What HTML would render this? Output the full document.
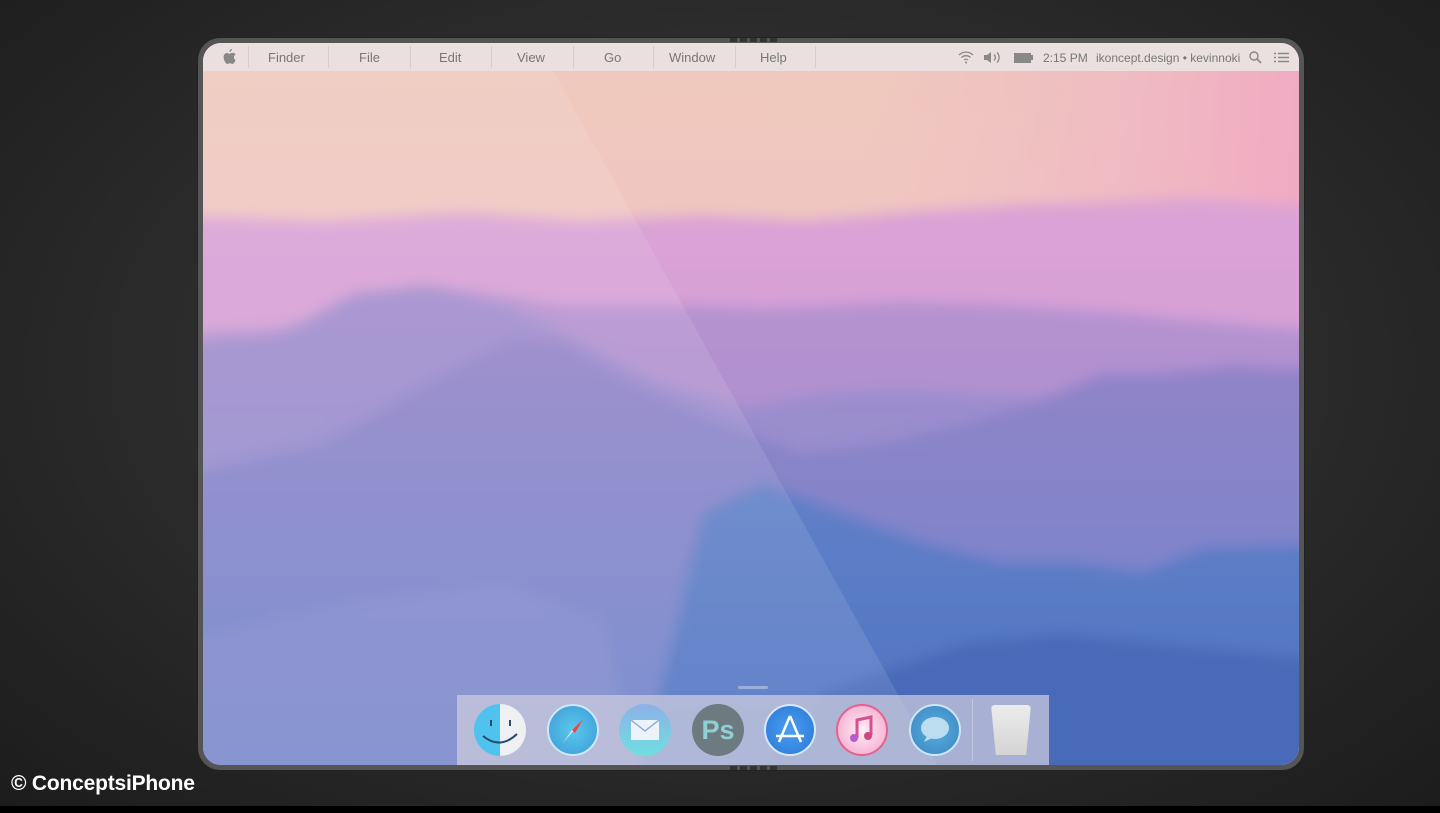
<!DOCTYPE html>
<html><head><meta charset="utf-8"><style>
html,body{margin:0;padding:0;width:1440px;height:813px;overflow:hidden;background:#2a2a2a;font-family:"Liberation Sans",sans-serif}
.bg{position:absolute;inset:0;background:radial-gradient(ellipse at 50% 45%,#3a3a3a 0%,#2b2b2b 55%,#1c1c1c 100%)}
.strip{position:absolute;left:0;top:806px;width:1440px;height:7px;background:#000}
.dev{position:absolute;left:198px;top:38px;width:1106px;height:732px;border-radius:22px;background:#555;box-shadow:0 0 0 1px #222}
.scr{position:absolute;left:203px;top:43px;width:1096px;height:722px;border-radius:18px;overflow:hidden;background:#7f90cc}
.menu{position:absolute;left:0;top:0;width:100%;height:28px;background:#e9e0df;color:#777;font-size:13px}
.menu span{position:absolute;top:7px}
.sep{position:absolute;top:3px;width:1px;height:22px;background:#d6cdcc}
.dock{position:absolute;left:254px;top:652px;width:592px;height:70px;background:rgba(205,205,222,.72)}
.ic{position:absolute;top:9px;width:52px;height:52px;border-radius:50%}
.copy{position:absolute;left:11px;top:772px;color:#fff;font-weight:bold;font-size:21px;letter-spacing:-0.2px}
</style></head><body>
<div class="bg"></div>
<div class="strip"></div>
<div class="dev"></div>
<div class="scr">
<svg width="1096" height="722" style="position:absolute;left:0;top:0">
<defs>
<filter id="b" x="-10%" y="-10%" width="120%" height="120%"><feGaussianBlur stdDeviation="7"/></filter>
<linearGradient id="sky" x1="0" y1="0" x2="0" y2="1"><stop offset="0" stop-color="#efc9bd"/><stop offset="1" stop-color="#f3bfcb"/></linearGradient>
<linearGradient id="skyr" x1="0" y1="0" x2="1" y2="0"><stop offset="0.6" stop-color="#f0b8c8" stop-opacity="0"/><stop offset="1" stop-color="#f09ec4" stop-opacity="0.7"/></linearGradient>
<linearGradient id="m1" x1="0" y1="0" x2="0" y2="1"><stop offset="0" stop-color="#dba2d6"/><stop offset="1" stop-color="#c69ad6"/></linearGradient>
<linearGradient id="m2" x1="0" y1="0" x2="0" y2="1"><stop offset="0" stop-color="#b692d0"/><stop offset="1" stop-color="#9e8cd0"/></linearGradient>
<linearGradient id="m3" x1="0" y1="0" x2="0" y2="1"><stop offset="0" stop-color="#a08ccc"/><stop offset="1" stop-color="#7f90d0"/></linearGradient>
<linearGradient id="m4" x1="0" y1="0" x2="0" y2="1"><stop offset="0" stop-color="#9484c8"/><stop offset="1" stop-color="#6484cc"/></linearGradient>
<linearGradient id="m5" x1="0" y1="0" x2="0" y2="1"><stop offset="0" stop-color="#6080c8"/><stop offset="1" stop-color="#4a6fc0"/></linearGradient>
</defs>
<rect width="1096" height="722" fill="url(#sky)"/>
<rect width="1096" height="300" fill="url(#skyr)"/>
<g filter="url(#b)">
<path d="M-60 172 L120 178 L260 170 L380 178 L500 172 L600 178 L720 168 L820 162 L940 158 L1000 156 L1160 168 L1160 800 L-60 800Z" fill="url(#m1)"/>
<path d="M-60 292 L80 285 L140 262 L180 248 L230 242 L300 252 L360 262 L420 262 L480 262 L560 265 L640 262 L700 258 L800 262 L900 268 L1000 278 L1160 292 L1160 800 L-60 800Z" fill="url(#m2)"/>
<path d="M-60 305 L80 290 L150 250 L220 242 L300 262 L380 300 L460 340 L540 365 L620 350 L700 345 L780 352 L860 355 L940 340 L1020 330 L1160 318 L1160 800 L-60 800Z" fill="url(#m3)" opacity="0.9"/>
<path d="M-60 440 L120 400 L240 330 L310 295 L360 300 L430 340 L520 380 L600 410 L680 400 L760 380 L830 360 L900 330 L960 330 L1030 322 L1160 330 L1160 800 L-60 800Z" fill="url(#m4)"/>
<path d="M420 800 L500 470 L560 440 L640 470 L720 500 L800 520 L880 520 L940 530 L1000 505 L1160 500 L1160 800Z" fill="url(#m5)"/>
<path d="M500 800 L620 650 L760 600 L860 590 L960 600 L1160 620 L1160 800Z" fill="#4a6ab8"/>
<path d="M-60 800 L-60 610 L150 560 L300 540 L400 580 L450 800Z" fill="#8a90cc" opacity="0.5"/>
</g>
<polygon points="0,28 350,28 734,722 0,722" fill="#fff" opacity="0.1"/>
</svg>
<div class="menu">
<svg style="position:absolute;left:20px;top:6px" width="13" height="16" viewBox="0 0 13 16"><path d="M9 0c0 1.5-1.2 2.8-2.6 2.7C6.3 1.3 7.6 0.1 9 0zM12.3 11.5c-.5 1.2-1.5 3.4-2.7 3.4-1.1 0-1.4-.7-2.7-.7s-1.7.7-2.7.7C2.9 14.9.6 11 .6 8c0-2.6 1.7-4 3.3-4 1.1 0 1.9.7 2.7.7.8 0 1.8-.8 3-.8.7 0 2.2.2 3 1.6-2.5 1.5-2 4.8.3 5.7z" fill="#888"/></svg>
<div class="sep" style="left:45px"></div>
<span style="left:65px">Finder</span><div class="sep" style="left:125px"></div>
<span style="left:156px">File</span><div class="sep" style="left:207px"></div>
<span style="left:236px">Edit</span><div class="sep" style="left:288px"></div>
<span style="left:314px">View</span><div class="sep" style="left:370px"></div>
<span style="left:401px">Go</span><div class="sep" style="left:450px"></div>
<span style="left:466px">Window</span><div class="sep" style="left:532px"></div>
<span style="left:557px">Help</span><div class="sep" style="left:612px"></div>
<svg style="position:absolute;left:755px;top:8px" width="16" height="13" viewBox="0 0 16 13"><path d="M1 4a10 10 0 0 1 14 0M3.5 6.5a6.5 6.5 0 0 1 9 0M6 9a3 3 0 0 1 4 0" stroke="#888" fill="none" stroke-width="1.3"/><circle cx="8" cy="11.5" r="1" fill="#888"/></svg>
<svg style="position:absolute;left:780px;top:8px" width="20" height="13" viewBox="0 0 20 13"><path d="M1 4h3l4-3v11l-4-3H1z" fill="#888"/><path d="M11 3.5a4 4 0 0 1 0 6M14 1.5a7 7 0 0 1 0 10" stroke="#888" fill="none" stroke-width="1.3"/></svg>
<div style="position:absolute;left:811px;top:10px;width:15px;height:8px;background:#888;border:1px solid #888"></div><div style="position:absolute;left:828px;top:12px;width:2px;height:5px;background:#888"></div>
<span style="left:840px;font-size:12px;top:8px">2:15 PM</span>
<span style="left:893px;font-size:12px;top:8px">ikoncept.design • kevinnoki</span>
<svg style="position:absolute;left:1046px;top:8px" width="13" height="13" viewBox="0 0 13 13"><circle cx="5" cy="5" r="4" stroke="#888" fill="none" stroke-width="1.4"/><path d="M8 8l4 4" stroke="#888" stroke-width="1.6"/></svg>
<svg style="position:absolute;left:1071px;top:9px" width="15" height="11" viewBox="0 0 15 11"><path d="M0 1.5h2M4 1.5h11M0 5.5h2M4 5.5h11M0 9.5h2M4 9.5h11" stroke="#888" stroke-width="1.5"/></svg>
</div>
<div style="position:absolute;left:535px;top:643px;width:30px;height:3px;border-radius:2px;background:rgba(255,255,255,.35)"></div>
<div class="dock">
<div class="ic" style="left:17px;background:linear-gradient(90deg,#4fc3ee 50%,#eef0f2 50%)"><svg width="52" height="52"><path d="M9 32q17 14 34 -2" stroke="#2a4b6b" stroke-width="2" fill="none"/><path d="M17 16v6M36 16v6" stroke="#2a4b6b" stroke-width="2"/></svg></div>
<div class="ic" style="left:90px;background:radial-gradient(#5cc9ea,#3a9ad8);border:2px solid #cfe8f5;width:48px;height:48px"><svg width="48" height="48"><path d="M34 13l-11 11-9 13z" fill="#eee"/><path d="M34 13l-8 14-3-3z" fill="#e44"/></svg></div>
<div class="ic" style="left:162px;background:linear-gradient(#8db0e8,#6fe0e0)"><svg width="52" height="52"><rect x="12" y="16" width="28" height="20" fill="#eef3fa"/><path d="M12 16l14 11 14-11" stroke="#8fb2d8" fill="none" stroke-width="1.5"/></svg></div>
<div class="ic" style="left:235px;background:#6d7a80;color:#8fd0d5;font-size:27px;font-weight:bold;text-align:center;line-height:52px">Ps</div>
<div class="ic" style="left:307px;background:radial-gradient(#4a9ef0,#2a78d8);border:2px solid #d8e8f8;width:48px;height:48px"><svg width="48" height="48"><path d="M24 10L13 36M24 10l11 26M10 30h28" stroke="#fff" stroke-width="2.5" fill="none"/></svg></div>
<div class="ic" style="left:379px;background:radial-gradient(#fdf0f5,#f4a0c8);border:2px solid #e86090;width:48px;height:48px"><svg width="48" height="48"><path d="M19 32V14l14-3v18" stroke="#d8508f" stroke-width="3" fill="none"/><circle cx="16" cy="32" r="4" fill="#b65ad0"/><circle cx="30" cy="30" r="4" fill="#d04880"/></svg></div>
<div class="ic" style="left:452px;background:radial-gradient(#5ab0e0,#3a84c0);border:2px solid #cde6f5;width:48px;height:48px"><svg width="48" height="48"><ellipse cx="24" cy="22" rx="14" ry="11" fill="#bcdcf0"/><path d="M16 30l-3 6 8-4z" fill="#bcdcf0"/></svg></div>
<div style="position:absolute;left:515px;top:4px;width:1px;height:62px;background:rgba(255,255,255,.3)"></div>
<div style="position:absolute;left:534px;top:10px;width:40px;height:50px;background:linear-gradient(#ececec,#d4d4d4);clip-path:polygon(0 0,100% 0,88% 100%,12% 100%);border-radius:4px"></div>
</div>
</div>
<div style="position:absolute;left:730px;top:38px;width:50px;height:4px;background:repeating-linear-gradient(90deg,#333 0 7px,transparent 7px 10px)"></div>
<div style="position:absolute;left:730px;top:766px;width:50px;height:4px;background:repeating-linear-gradient(90deg,#333 0 7px,transparent 7px 10px)"></div>
<div class="copy">© ConceptsiPhone</div>
</body></html>
